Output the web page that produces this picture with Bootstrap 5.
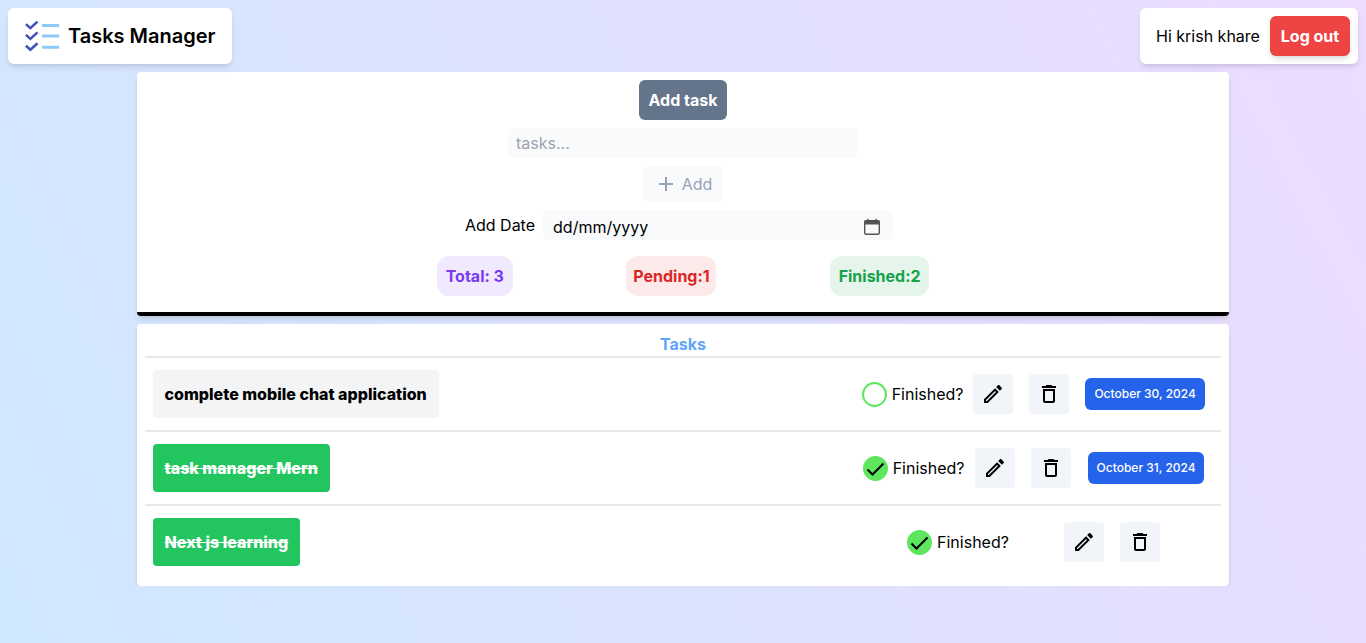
<!DOCTYPE html>
<html lang="en">
<head>
<meta charset="utf-8">
<meta name="viewport" content="width=device-width, initial-scale=1">
<title>Tasks Manager</title>
<link href="https://cdn.jsdelivr.net/npm/bootstrap@5.3.0/dist/css/bootstrap.min.css" rel="stylesheet">
<style>
  body {
    font-family: Inter, "Noto Sans", sans-serif;
    font-size: 16px;
    line-height: 24px;
    color: #000;
    background: linear-gradient(63deg, #cfe8ff, #eddcff) fixed;
  }
  .panel { background: #fff; border-radius: 4px; }
  .lift { box-shadow: 0 4px 6px -1px rgba(0,0,0,.1), 0 2px 4px -2px rgba(0,0,0,.1); }
  .bar-box { background: #fff; border-radius: 6px; height: 56px; }
  .brand-title { font-size: 20px; line-height: 28px; font-weight: 600; }
  .greeting { min-width: 106px; }
  .btn { --bs-btn-padding-x: 8px; --bs-btn-padding-y: 8px; --bs-btn-border-width: 0; --bs-btn-border-radius: 6px; line-height: 24px; }
  .btn-logout { width: 80px; background: #ef4444; color: #fff; }
  .btn-addtask { width: 88px; background: #64748b; color: #fff; white-space: nowrap; }
  .btn-add.btn:disabled { width: 80px; height: 36px; padding: 6px 8px; background: #f8fafc; color: #94a3b8; opacity: 1; border-radius: 4px; }
  .main-col { width: 80%; }
  .add-panel { border-bottom: 4px solid #000; padding-bottom: 16px; }
  .field { width: 350px; max-width: 100%; height: 30px; background: #f8fafc; border: 0; border-radius: 6px; padding: 0 8px; color: #000; }
  .field::placeholder { color: #9ca3af; opacity: 1; }
  .field-date { padding: 4px 10px 0; }
  .field-date::placeholder { color: #000; }
  .date-icon { right: 12px; top: 8px; color: #545454; pointer-events: none; }
  .counts { width: 606px; max-width: 100%; }
  .pill { border-radius: 12px; padding: 8px 0; font-weight: 700; text-align: center; }
  .pill-total { width: 76px; background: #f1e9fd; color: #7c3aed; }
  .pill-pending { width: 90px; background: #fce9e9; color: #dc2626; }
  .pill-finished { width: 99px; background: #e6f5ec; color: #16a34a; }
  .list-title { color: #60a5fa; font-size: 16px; line-height: 24px; font-weight: 700; }
  .task-row { border-top: 2px solid #e5e7eb; height: 74px; padding: 0 8px; }
  .task-name { background: #f3f4f6; border-radius: 4px; padding: 12px; font-weight: 800; }
  .task-name.is-done { background: #22c55e; color: #fff; text-decoration: line-through; }
  .task-side { width: 352px; }
  .finish { width: 103px; gap: 5px; white-space: nowrap; }
  .finish-box { appearance: none; width: 25px; height: 25px; margin: 0; flex: none; border: 2px solid #5ee65e; border-radius: 50%; }
  .finish-box:checked { background: #5ee65e url("data:image/svg+xml,%3Csvg xmlns='http://www.w3.org/2000/svg' viewBox='0 0 21 21'%3E%3Cpath d='M2.500 11.500l5 5L18.500 5.500' fill='none' stroke='%23000' stroke-width='2'/%3E%3C/svg%3E") center / 21px no-repeat; }
  .icon-btn { width: 40px; height: 40px; background: #f1f5f9; border-radius: 4px; }
  .due { font-size: 12px; font-weight: 500; line-height: 24px; padding: 4px 0; width: 120px; text-align: center; background: #2563eb; color: #fff; border-radius: 6px; white-space: nowrap; }
  .due-narrow { width: 116px; }
</style>
</head>
<body>
<header class="d-flex justify-content-between p-2">
  <div class="bar-box lift d-flex align-items-center px-3">
    <svg width="36" height="36" viewBox="0 0 48 48" aria-hidden="true">
      <path fill="none" stroke="#3f51b5" stroke-width="3.400" d="M2.500 8.200l6 5.300L18 4.800M2.500 22.500l6 5.300L18 19.100M2.500 37l6 5.300L18 33.600"/>
      <path fill="#90caf9" d="M24 8h23v4H24zM24 22h23v4H24zM24 37h23v4H24z"/>
    </svg>
    <span class="brand-title ms-2">Tasks Manager</span>
  </div>
  <div class="bar-box lift d-flex align-items-center gap-2 ps-3 pe-2">
    <span class="greeting">Hi krish khare</span>
    <button type="button" class="btn btn-logout lift fw-bold">Log out</button>
  </div>
</header>
<main class="main-col mx-auto">
  <section class="panel lift add-panel d-flex flex-column align-items-center gap-2 pt-2 mb-2">
    <button type="button" class="btn btn-addtask fw-bold">Add task</button>
    <input type="text" class="field" placeholder="tasks..." aria-label="Task">
    <button type="button" class="btn btn-add d-flex align-items-center justify-content-center gap-1" disabled>
      <svg width="24" height="24" viewBox="0 0 24 24" fill="currentColor" aria-hidden="true"><path d="M19 13h-6v6h-2v-6H5v-2h6V5h2v6h6z"/></svg>
      Add
    </button>
    <div class="d-flex align-items-center gap-2 mw-100 pe-2">
      <label for="due-date">Add Date</label>
      <div class="position-relative d-flex">
        <input type="text" id="due-date" class="field field-date" placeholder="dd/mm/yyyy" inputmode="numeric">
        <svg class="date-icon position-absolute" width="18" height="18" viewBox="0 0 18 18" aria-hidden="true"><rect x="1.700" y="3" width="14.600" height="13.300" rx="1.500" fill="none" stroke="currentColor" stroke-width="1.400"/><path fill="currentColor" d="M1 6.500V4a2 2 0 0 1 2-2h1V1h1.500v1h7V1H14v1h1a2 2 0 0 1 2 2v2.500z"/></svg>
      </div>
    </div>
    <div class="counts d-flex justify-content-around mt-2">
      <span class="pill pill-total">Total: 3</span>
      <span class="pill pill-pending">Pending:1</span>
      <span class="pill pill-finished">Finished:2</span>
    </div>
  </section>
  <section class="panel lift p-2">
    <h1 class="list-title text-center mb-0">Tasks</h1>
    <div class="task-row d-flex align-items-center justify-content-between">
      <span class="task-name">complete mobile chat application</span>
      <div class="task-side d-flex align-items-center justify-content-evenly">
        <label class="finish d-flex align-items-center"><input type="checkbox" class="finish-box">Finished?</label>
        <div class="d-flex gap-3 px-2">
          <button type="button" class="btn icon-btn p-2" aria-label="Edit"><svg class="d-block" width="24" height="24" viewBox="0 0 24 24" aria-hidden="true"><path d="m14.060 9.020.92.920L5.920 19H5v-.920l9.060-9.060M17.660 3c-.250 0-.510.100-.700.290l-1.830 1.830 3.750 3.750 1.830-1.830c.390-.390.390-1.020 0-1.410l-2.340-2.340c-.200-.200-.450-.290-.710-.290zm-3.600 3.190L3 17.250V21h3.750L17.810 9.940l-3.750-3.750z"/></svg></button>
          <button type="button" class="btn icon-btn p-2" aria-label="Delete"><svg class="d-block" width="24" height="24" viewBox="0 0 24 24" aria-hidden="true"><path d="M6 19c0 1.100.900 2 2 2h8c1.100 0 2-.900 2-2V7H6v12zM8 9h8v10H8V9zm7.500-5-1-1h-5l-1 1H5v2h14V4h-3.500z"/></svg></button>
        </div>
        <span class="due mx-2">October 30, 2024</span>
      </div>
    </div>
    <div class="task-row d-flex align-items-center justify-content-between">
      <span class="task-name is-done">task manager Mern</span>
      <div class="task-side d-flex align-items-center justify-content-evenly">
        <label class="finish d-flex align-items-center"><input type="checkbox" class="finish-box" checked>Finished?</label>
        <div class="d-flex gap-3 px-2">
          <button type="button" class="btn icon-btn p-2" aria-label="Edit"><svg class="d-block" width="24" height="24" viewBox="0 0 24 24" aria-hidden="true"><path d="m14.060 9.020.92.920L5.920 19H5v-.920l9.060-9.060M17.660 3c-.250 0-.510.100-.700.290l-1.830 1.830 3.750 3.750 1.830-1.830c.390-.390.390-1.020 0-1.410l-2.340-2.340c-.200-.200-.450-.290-.710-.290zm-3.600 3.190L3 17.250V21h3.750L17.810 9.940l-3.750-3.750z"/></svg></button>
          <button type="button" class="btn icon-btn p-2" aria-label="Delete"><svg class="d-block" width="24" height="24" viewBox="0 0 24 24" aria-hidden="true"><path d="M6 19c0 1.100.900 2 2 2h8c1.100 0 2-.900 2-2V7H6v12zM8 9h8v10H8V9zm7.500-5-1-1h-5l-1 1H5v2h14V4h-3.500z"/></svg></button>
        </div>
        <span class="due due-narrow mx-2">October 31, 2024</span>
      </div>
    </div>
    <div class="task-row d-flex align-items-center justify-content-between">
      <span class="task-name is-done">Next js learning</span>
      <div class="task-side d-flex align-items-center justify-content-evenly">
        <label class="finish d-flex align-items-center"><input type="checkbox" class="finish-box" checked>Finished?</label>
        <div class="d-flex gap-3 px-2">
          <button type="button" class="btn icon-btn p-2" aria-label="Edit"><svg class="d-block" width="24" height="24" viewBox="0 0 24 24" aria-hidden="true"><path d="m14.060 9.020.92.920L5.920 19H5v-.920l9.060-9.060M17.660 3c-.250 0-.510.100-.700.290l-1.830 1.830 3.750 3.750 1.830-1.830c.390-.390.390-1.020 0-1.410l-2.340-2.340c-.200-.200-.450-.290-.710-.290zm-3.600 3.190L3 17.250V21h3.750L17.810 9.940l-3.750-3.750z"/></svg></button>
          <button type="button" class="btn icon-btn p-2" aria-label="Delete"><svg class="d-block" width="24" height="24" viewBox="0 0 24 24" aria-hidden="true"><path d="M6 19c0 1.100.900 2 2 2h8c1.100 0 2-.900 2-2V7H6v12zM8 9h8v10H8V9zm7.500-5-1-1h-5l-1 1H5v2h14V4h-3.500z"/></svg></button>
        </div>
      </div>
    </div>
  </section>
</main>
<script src="https://cdn.jsdelivr.net/npm/bootstrap@5.3.0/dist/js/bootstrap.bundle.min.js"></script>
</body>
</html>
